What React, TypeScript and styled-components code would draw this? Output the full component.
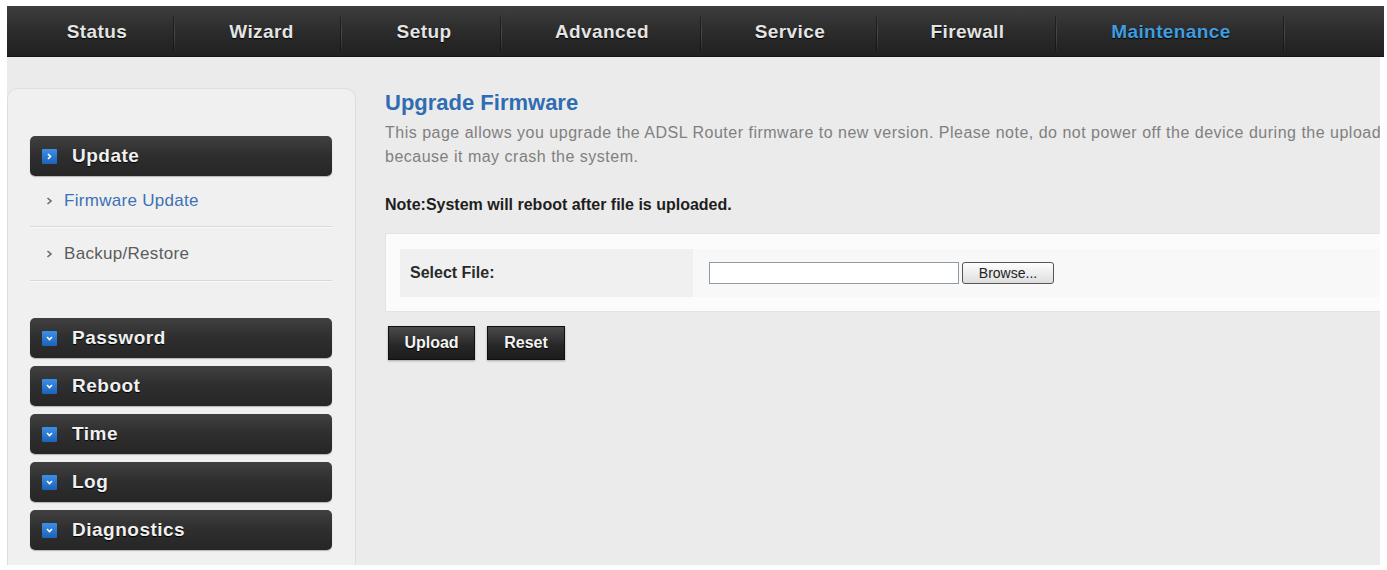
import React, { useState } from "react";
import styled, { createGlobalStyle } from "styled-components";

const GlobalStyle = createGlobalStyle`
  html, body {
    margin: 0;
    padding: 0;
    background: #fff;
    font-family: "Liberation Sans", Arial, sans-serif;
  }
`;

const Page = styled.div`
  width: 1377px;
  padding: 6px 0 0 7px;
`;

const NavBar = styled.div`
  display: flex;
  height: 51px;
  background: linear-gradient(#3e3e3e 0%, #2d2d2d 45%, #1f1f1f 100%);
  box-shadow: inset 0 -1px 0 #151515;
`;

const NavItem = styled.div<{ $w: number; $shift?: number; $active?: boolean }>`
  position: relative;
  width: ${(p) => p.$w}px;
  display: flex;
  align-items: center;
  justify-content: center;
  padding-left: ${(p) => p.$shift || 0}px;
  box-sizing: border-box;
  font-size: 19px;
  font-weight: 700;
  letter-spacing: 0.4px;
  color: ${(p) => (p.$active ? "#3f9ee0" : "#e4e4e4")};
  text-shadow: 0 1px 1px #000;

  /* faint divider between menu cells */
  &::after {
    content: "";
    position: absolute;
    right: 0;
    top: 10px;
    bottom: 6px;
    width: 1px;
    background: linear-gradient(rgba(70, 70, 70, 0.2), #4a4a4a 50%, rgba(70, 70, 70, 0.2));
    box-shadow: -1px 0 0 rgba(0, 0, 0, 0.35);
  }
  &:last-child::after {
    display: none;
  }
`;

const Body = styled.div`
  display: flex;
  height: 508px;
  width: 1373px;
  background: #ebebeb;
`;

const Sidebar = styled.div`
  width: 302px;
  margin-top: 31px;
  padding: 47px 23px 16px 22px;
  background: #f0f0f0;
  border: 1px solid #dedede;
  border-bottom: none;
  border-radius: 10px 10px 0 0;
`;

const Header = styled.div<{ $first?: boolean }>`
  display: flex;
  align-items: center;
  height: 40px;
  margin-top: ${(p) => (p.$first ? 0 : 8)}px;
  padding-left: 12px;
  border-radius: 5px;
  background: linear-gradient(#404040 0%, #2e2e2e 50%, #262626 100%);
  box-shadow: 0 1px 1px rgba(0, 0, 0, 0.25);
  color: #f0f0f0;
  font-size: 19px;
  font-weight: 700;
  letter-spacing: 0.5px;
  text-shadow: 0 1px 1px #000;
  cursor: pointer;
`;

const Square = styled.span`
  display: inline-flex;
  align-items: center;
  justify-content: center;
  width: 15px;
  height: 15px;
  margin-right: 15px;
  background: linear-gradient(#3d90e6, #1c62b8);
  border-radius: 1px;
`;

const SubList = styled.div`
  margin-bottom: 37px;
`;

const SubItem = styled.div<{ $active?: boolean }>`
  display: flex;
  align-items: center;
  height: 50px;
  padding-left: 16px;
  border-bottom: 1px solid #d9d9d9;
  box-shadow: 0 1px 0 #fafafa;
  font-size: 17px;
  letter-spacing: 0.3px;
  color: ${(p) => (p.$active ? "#3c71b6" : "#5c5c5c")};
  cursor: pointer;
  &:nth-child(2) {
    height: 53px;
  }
`;

const Chevron = styled.span`
  width: 18px;
  display: inline-flex;
  align-items: center;
`;

const Content = styled.div`
  flex: 1;
  padding: 33px 0 0 29px;
  overflow: hidden;
`;

const Title = styled.h1`
  margin: 0 0 5px;
  font-size: 22px;
  line-height: 26px;
  font-weight: 700;
  color: #2f6db3;
`;

const Desc = styled.p`
  margin: 0;
  font-size: 16px;
  line-height: 24px;
  letter-spacing: 0.5px;
  color: #808080;
  white-space: nowrap;
`;

const Note = styled.p`
  margin: 26px 0 0;
  font-size: 16px;
  line-height: 20px;
  font-weight: 700;
  color: #1e1e1e;
`;

const FormBox = styled.div`
  margin-top: 18px;
  padding: 15px 0 14px 14px;
  background: #fbfbfb;
  border: 1px solid #e3e3e3;
  border-right: none;
`;

const FormRow = styled.div`
  display: flex;
  height: 48px;
`;

const LabelCell = styled.div`
  width: 283px;
  display: flex;
  align-items: center;
  padding-left: 10px;
  background: #f0f0f0;
  font-size: 16px;
  font-weight: 700;
  color: #2a2a2a;
`;

const ValueCell = styled.div`
  flex: 1;
  display: flex;
  align-items: center;
  padding-left: 16px;
  background: #f8f8f8;
`;

const FileInput = styled.div`
  width: 248px;
  height: 20px;
  background: #fff;
  border: 1px solid #8e9aa6;
`;

const Browse = styled.button`
  height: 22px;
  width: 92px;
  margin-left: 3px;
  padding: 0;
  border: 1px solid #555;
  border-radius: 3px;
  background: linear-gradient(#fdfdfd, #dedede);
  font-family: "Liberation Sans", Arial, sans-serif;
  font-size: 14px;
  color: #222;
`;

const Actions = styled.div`
  display: flex;
  gap: 12px;
  margin: 14px 0 0 3px;
`;

const DarkButton = styled.button<{ $w: number }>`
  width: ${(p) => p.$w}px;
  height: 34px;
  padding: 0;
  border: 1px solid #111;
  background: linear-gradient(#4a4a4a, #262626 60%, #1c1c1c);
  color: #f4f4f4;
  font-family: "Liberation Sans", Arial, sans-serif;
  font-size: 16px;
  font-weight: 700;
  text-shadow: 0 1px 1px #000;
  box-shadow: 0 1px 2px rgba(0, 0, 0, 0.3);
  cursor: pointer;
`;

const ArrowIcon = ({ down }: { down?: boolean }) => (
  <svg width="9" height="9" viewBox="0 0 9 9">
    <path
      d={down ? "M2 3 L4.5 5.5 L7 3" : "M3 2 L5.5 4.5 L3 7"}
      fill="none"
      stroke="#fff"
      strokeWidth="1.6"
    />
  </svg>
);

const SmallChevron = () => (
  <svg width="7" height="8" viewBox="0 0 7 8">
    <path d="M1.5 1 L5 4 L1.5 7" fill="none" stroke="#6a6a6a" strokeWidth="1.6" />
  </svg>
);

const menu = [
  { label: "Status", w: 168, shift: 12 },
  { label: "Wizard", w: 167, shift: 6 },
  { label: "Setup", w: 160, shift: 4 },
  { label: "Advanced", w: 200 },
  { label: "Service", w: 176 },
  { label: "Firewall", w: 179 },
  { label: "Maintenance", w: 228 },
  { label: "", w: 99 },
];

const groups = ["Password", "Reboot", "Time", "Log", "Diagnostics"];

export default function App() {
  const [active, setActive] = useState("Firmware Update");

  return (
    <Page>
      <GlobalStyle />
      <NavBar>
        {menu.map((m, i) => (
          <NavItem key={i} $w={m.w} $shift={m.shift} $active={m.label === "Maintenance"}>
            {m.label}
          </NavItem>
        ))}
      </NavBar>

      <Body>
        <Sidebar>
          <Header $first>
            <Square>
              <ArrowIcon />
            </Square>
            Update
          </Header>
          <SubList>
            {["Firmware Update", "Backup/Restore"].map((s) => (
              <SubItem key={s} $active={s === active} onClick={() => setActive(s)}>
                <Chevron>
                  <SmallChevron />
                </Chevron>
                {s}
              </SubItem>
            ))}
          </SubList>
          {groups.map((g, i) => (
            <Header key={g} $first={i === 0}>
              <Square>
                <ArrowIcon down />
              </Square>
              {g}
            </Header>
          ))}
        </Sidebar>

        <Content>
          <Title>Upgrade Firmware</Title>
          <Desc>
            This page allows you upgrade the ADSL Router firmware to new version. Please note, do not power off the device during the upload
            <br />
            because it may crash the system.
          </Desc>
          <Note>Note:System will reboot after file is uploaded.</Note>

          <FormBox>
            <FormRow>
              <LabelCell>Select File:</LabelCell>
              <ValueCell>
                <FileInput />
                <Browse>Browse...</Browse>
              </ValueCell>
            </FormRow>
          </FormBox>

          <Actions>
            <DarkButton $w={87}>Upload</DarkButton>
            <DarkButton $w={78}>Reset</DarkButton>
          </Actions>
        </Content>
      </Body>
    </Page>
  );
}
